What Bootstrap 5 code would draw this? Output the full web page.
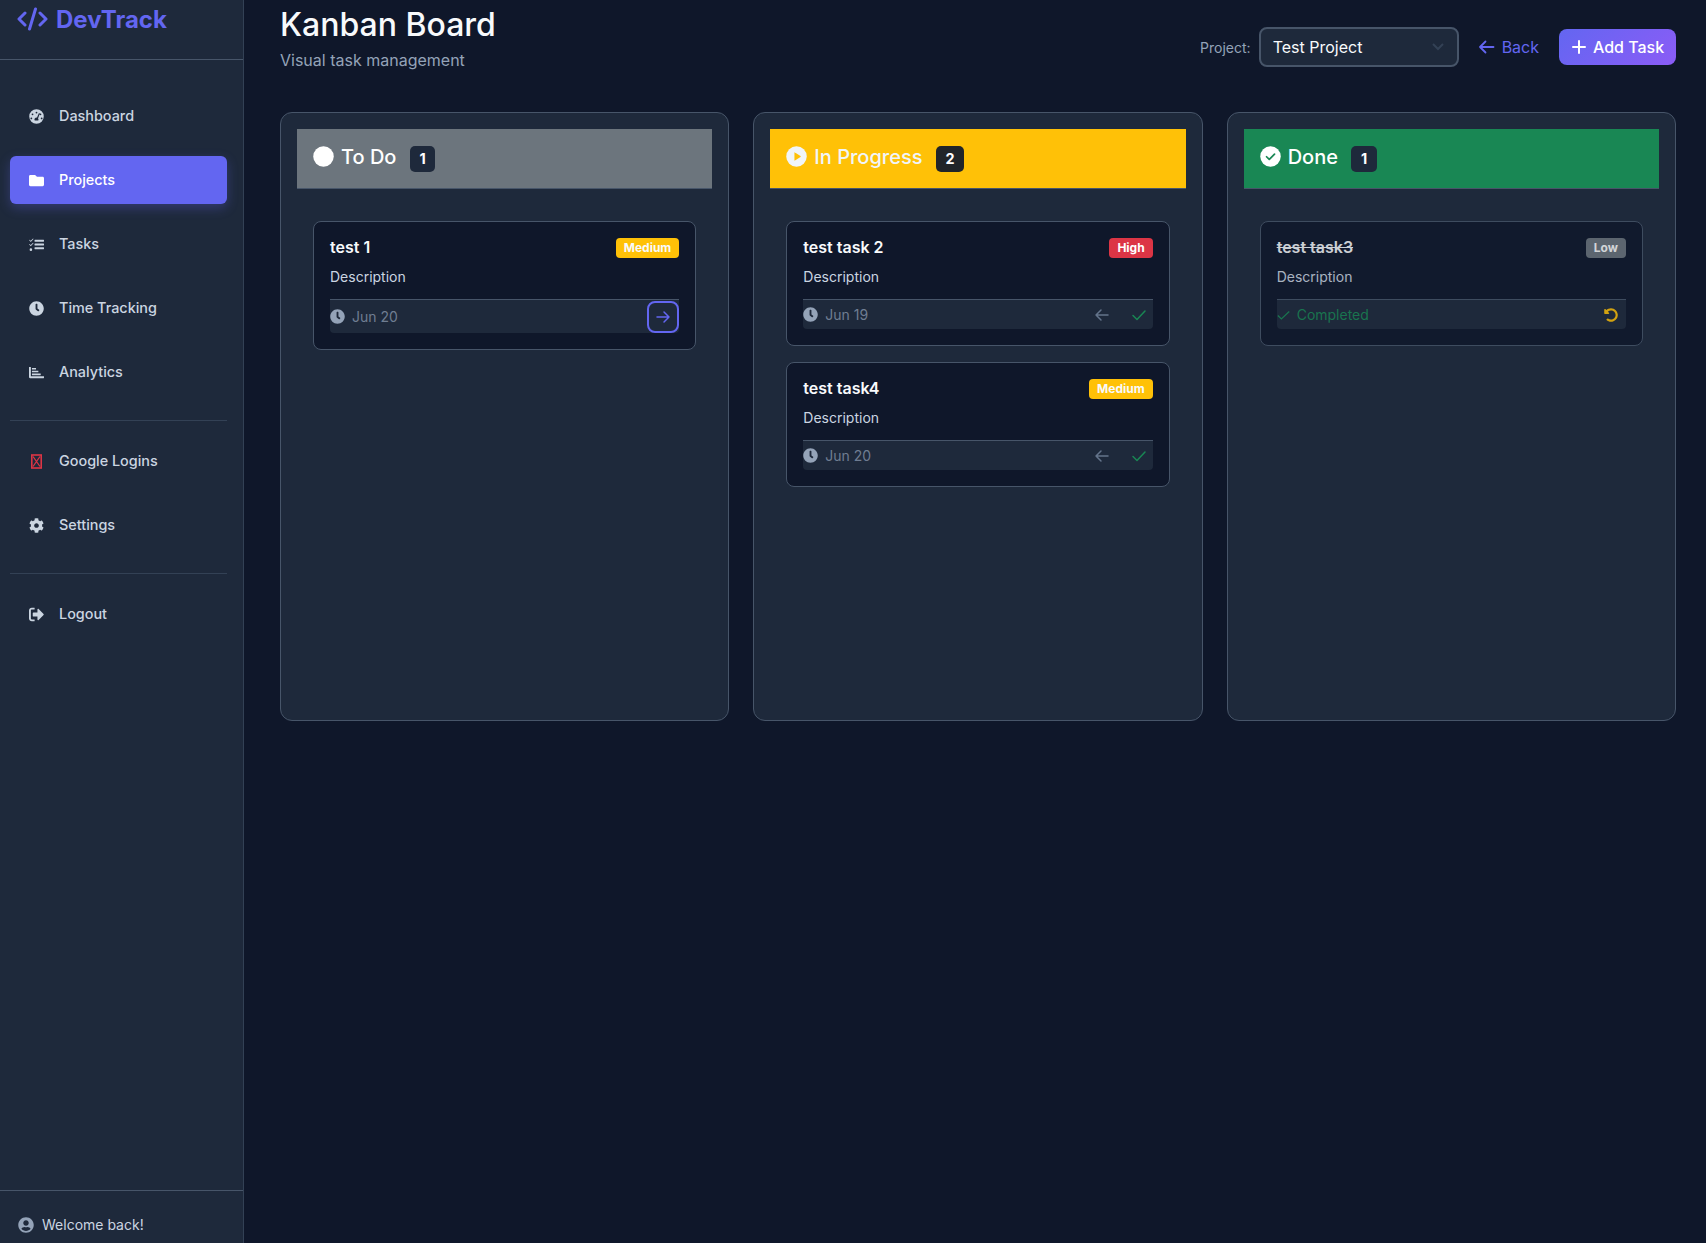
<!DOCTYPE html>
<html lang="en"><head><meta charset="utf-8"><title>Kanban Board</title>
<link href="https://cdn.jsdelivr.net/npm/bootstrap@5.3.0/dist/css/bootstrap.min.css" rel="stylesheet">
<style>
html,body{height:100%}
body{background:#0f172a;color:#f8fafc;font-family:Inter,"Liberation Sans",sans-serif;overflow:hidden}
.dt-shell{height:1243px}
.dt-side{width:244px;flex:none;background:#1e293b;border-right:1px solid #334155}
.dt-brand{height:60px;padding:2px 17px 0;border-bottom:1px solid #475569;color:#6366f1;font-size:24px;font-weight:700;line-height:36px;gap:8px}
.dt-menu{padding:32px 16px 0 10px}
.dt-link{height:48px;margin-bottom:16px;padding:0 19px;gap:15px;color:#cbd5e1;font-size:14.4px;font-weight:500;border-radius:6px;text-decoration:none}
.dt-link svg{width:15px;height:15px;fill:currentColor;flex:none}
.dt-link.is-on{background:#6366f1;color:#fff;box-shadow:0 4px 12px rgba(99,102,241,.3)}
.dt-rule{border-top:1px solid #334155;margin:8px 0 16px;height:0}
.dt-foot{height:53px;border-top:1px solid #475569;padding:23px 18px 0;margin-top:auto;gap:8px;color:#cbd5e1;font-size:14px}
.dt-foot svg{width:16px;height:16px;fill:#94a3b8;margin-top:3px}
.dt-main{padding:6px 30px 0 36px;min-width:0}
.dt-title{font-size:32px;font-weight:500;line-height:38px;margin:0;color:#f8fafc}
.dt-sub{color:#94a3b8;font-size:16px;line-height:24px;margin:4px 0 0}
.dt-top{height:106px}
.dt-tools{padding-top:21px;gap:20px}
.dt-plabel{color:#94a3b8;font-size:14px;margin-right:8px;margin-top:1px}
.dt-select{width:200px;height:40px;background-color:#1e293b;border:2px solid #475569;border-radius:8px;color:#f8fafc;font-size:16px;padding:0 12px;appearance:none}
.dt-selwrap{position:relative}
.dt-selwrap svg{position:absolute;right:15px;top:15px;width:12px;height:10px;stroke:#334155;fill:none;stroke-width:2;pointer-events:none}
.dt-back{color:#6366f1;font-size:16px;gap:7px;text-decoration:none;padding:0;border:0}
.dt-back svg{margin-left:-1px}
.dt-add{height:36px;width:117px;color:#fff;font-size:16px;font-weight:500;gap:6px;border:0;border-radius:8px;background:linear-gradient(135deg,#6366f1,#8b5cf6);padding:0}
.dt-board{display:grid;grid-template-columns:repeat(3,1fr);gap:24px}
.dt-col{height:609px;background:#1e293b;border:1px solid #475569;border-radius:12px;padding:16px}
.dt-head{height:60px;padding:0 16px 4px;font-size:20px;font-weight:500;border-bottom:1px solid #475569;gap:7px;color:#fff}
.dt-head svg{width:21px;height:21px;flex:none;margin-top:-1px}
.dt-head.h-todo{background:#6c757d}.dt-head.h-prog{background:#ffc107;color:#f1f5f9}.dt-head.h-done{background:#198754}
.dt-count{display:inline-flex;align-items:center;justify-content:center;height:26px;padding:0 9.5px;margin-left:6.5px;margin-top:5px;background:#1e293b;color:#fff;font-size:14.4px;font-weight:700;border-radius:5px}
.h-prog .dt-count{background:#212529}
.dt-list{padding:32px 16px 0}
.dt-task{background:#0f172a;border:1px solid #475569;border-radius:8px;padding:16px;margin-bottom:16px;color:#f8fafc}
.dt-task.is-done{opacity:.8}
.dt-name{font-size:16px;font-weight:600;line-height:19px;margin:0}
.is-done .dt-name{text-decoration:line-through}
.dt-pri{font-size:12px;font-weight:700;line-height:14px;height:20px;padding:3px 8px;border-radius:4px;color:#fff}
.dt-pri.p-m{background:#ffc107;color:#f8fafc}.dt-pri.p-h{background:#dc3545}.dt-pri.p-l{background:#6c757d}
.dt-desc{color:#cbd5e1;font-size:14px;line-height:22px;margin:8px 0 11px}
.dt-bar{min-height:30px;background:#1e293b;border-top:1px solid #475569;border-radius:0 0 4px 4px;color:#6f7d92;font-size:14px}
.dt-date{gap:7px}
.dt-clock{width:15px;height:15px;fill:#94a3b8}
.dt-pair{margin-right:-2px}
.dt-act{width:32px;height:29px;display:flex;align-items:center;justify-content:center;background:none;border:0;padding:0;border-radius:8px}
.dt-act svg{width:16px;height:16px;fill:none;stroke:currentColor;stroke-width:1.5;stroke-linecap:round;stroke-linejoin:round}
.dt-act.a-next{height:32px;margin-top:1px;border:2px solid #6366f1;color:#6366f1}
.dt-act.a-prev{color:#64748b}.dt-act.a-ok{color:#198754;margin-left:5px}
.dt-act.a-undo{color:#ffc107;width:30px}
.dt-act.a-undo svg{width:14px;height:14px;fill:currentColor;stroke:none}
.dt-comp{color:#198754;gap:6px}
.dt-comp svg{width:14px;height:14px;fill:none;stroke:currentColor;stroke-width:1.5}
</style></head>
<body>
<div class="d-flex dt-shell">
<aside class="dt-side d-flex flex-column">
  <div class="dt-brand d-flex align-items-start">
    <svg width="31" height="26" viewBox="0 0 31 26" fill="none" stroke="#6366f1" stroke-width="3" stroke-linecap="round" stroke-linejoin="round" class="mt-1"><path d="M8 7 2 13l6 6M23 7l6 6-6 6M18.500 3 12.500 23"/></svg>
    <span>DevTrack</span>
  </div>
  <nav class="dt-menu d-flex flex-column">
    <a class="dt-link d-flex align-items-center" href="#"><svg viewBox="0 0 512 512"><path fill-rule="evenodd" d="M256 8a248 248 0 1 0 0 496 248 248 0 0 0 0-496zM256 90a30 30 0 1 1 0 60 30 30 0 0 1 0-60zM120 150a30 30 0 1 1 0 60 30 30 0 0 1 0-60zM80 290a30 30 0 1 1 0 60 30 30 0 0 1 0-60zM432 290a30 30 0 1 1 0 60 30 30 0 0 1 0-60zM392 150a30 30 0 1 1 0 60 30 30 0 0 1 0-60zM340 140l30 14-62 170c20 22 20 50 8 70H196c-30-50 10-110 78-104z"/></svg>Dashboard</a>
    <a class="dt-link is-on d-flex align-items-center" href="#"><svg viewBox="0 0 512 512"><path d="M464 128H272l-64-64H48C21.490 64 0 85.490 0 112v288c0 26.510 21.490 48 48 48h416c26.510 0 48-21.490 48-48V176c0-26.510-21.490-48-48-48z"/></svg>Projects</a>
    <a class="dt-link d-flex align-items-center" href="#"><svg viewBox="0 0 512 512"><path d="M200 96h300a12 12 0 0 1 12 12v40a12 12 0 0 1-12 12H200a12 12 0 0 1-12-12v-40a12 12 0 0 1 12-12zM200 224h300a12 12 0 0 1 12 12v40a12 12 0 0 1-12 12H200a12 12 0 0 1-12-12v-40a12 12 0 0 1 12-12zM200 352h300a12 12 0 0 1 12 12v40a12 12 0 0 1-12 12H200a12 12 0 0 1-12-12v-40a12 12 0 0 1 12-12zM65 388a44 44 0 1 0 0 88 44 44 0 0 0 0-88zM139 50 60 130 15 90 0 105l60 65 95-105zM139 195l-79 80-45-40-15 15 60 65 95-105z"/></svg>Tasks</a>
    <a class="dt-link d-flex align-items-center" href="#"><svg viewBox="0 0 512 512"><path d="M256,8C119,8,8,119,8,256S119,504,256,504,504,393,504,256,393,8,256,8Zm92.490,313h0l-20,25a16,16,0,0,1-22.490,2.500h0l-67-49.720a40,40,0,0,1-15-31.230V112a16,16,0,0,1,16-16h32a16,16,0,0,1,16,16V256l58,42.500A16,16,0,0,1,348.490,321Z"/></svg>Time Tracking</a>
    <a class="dt-link d-flex align-items-center" href="#"><svg viewBox="0 0 512 512"><path d="M500 384c6.600 0 12 5.400 12 12v40c0 6.600-5.400 12-12 12H36c-19.900 0-36-16.100-36-36V76c0-6.600 5.400-12 12-12h40c6.600 0 12 5.400 12 12v308zM110 290h280c6 0 10 4 10 10v36c0 6-4 10-10 10H110c-6 0-10-4-10-10v-36c0-6 4-10 10-10zM110 195h200c6 0 10 4 10 10v36c0 6-4 10-10 10H110c-6 0-10-4-10-10v-36c0-6 4-10 10-10zM110 100h120c6 0 10 4 10 10v36c0 6-4 10-10 10H110c-6 0-10-4-10-10v-36c0-6 4-10 10-10z"/></svg>Analytics</a>
    <div class="dt-rule"></div>
    <a class="dt-link d-flex align-items-center" href="#"><svg viewBox="0 0 15 15"><rect x="2.800" y="1" width="9.400" height="13" fill="none" stroke="#dc3545" stroke-width="1.600"/><path d="M4 2.500 11 12.500M11 2.500 4 12.500" stroke="#dc3545" stroke-width="1.300" fill="none"/></svg>Google Logins</a>
    <a class="dt-link d-flex align-items-center" href="#"><svg viewBox="0 0 512 512"><path d="M487.400 315.700l-42.600-24.600c4.300-23.200 4.300-47 0-70.200l42.600-24.600c4.900-2.800 7.100-8.600 5.500-14-11.100-35.600-30-67.800-54.700-94.600-3.800-4.100-10-5.100-14.800-2.300L380.800 110c-17.900-15.400-38.500-27.300-60.800-35.100V25.800c0-5.600-3.900-10.500-9.400-11.700-36.700-8.200-74.300-7.800-109.200 0-5.500 1.200-9.400 6.100-9.400 11.700V75c-22.200 7.900-42.800 19.800-60.800 35.100L88.700 85.500c-4.900-2.800-11-1.900-14.800 2.300-24.700 26.700-43.600 58.900-54.700 94.600-1.700 5.400.6 11.200 5.500 14L67.300 221c-4.300 23.200-4.300 47 0 70.200l-42.600 24.600c-4.900 2.800-7.100 8.600-5.500 14 11.100 35.600 30 67.800 54.700 94.600 3.800 4.100 10 5.100 14.800 2.300l42.600-24.600c17.900 15.400 38.500 27.300 60.800 35.100v49.200c0 5.600 3.900 10.500 9.400 11.700 36.700 8.200 74.300 7.800 109.200 0 5.500-1.200 9.400-6.100 9.400-11.700v-49.200c22.200-7.900 42.800-19.800 60.800-35.100l42.600 24.600c4.900 2.800 11 1.900 14.800-2.300 24.700-26.700 43.600-58.900 54.700-94.600 1.500-5.500-.7-11.300-5.600-14.100zM256 336c-44.100 0-80-35.900-80-80s35.900-80 80-80 80 35.900 80 80-35.900 80-80 80z"/></svg>Settings</a>
    <div class="dt-rule"></div>
    <a class="dt-link d-flex align-items-center" href="#"><svg viewBox="0 0 512 512"><path d="M497 273 329 441c-15 15-41 4.500-41-17v-96H152c-13.300 0-24-10.700-24-24v-96c0-13.300 10.700-24 24-24h136V88c0-21.400 25.900-32 41-17l168 168c9.300 9.400 9.300 24.600 0 34zM192 436v40c0 6.600-5.400 12-12 12H96c-53 0-96-43-96-96V120c0-53 43-96 96-96h84c6.600 0 12 5.400 12 12v40c0 6.600-5.400 12-12 12H96c-17.700 0-32 14.300-32 32v272c0 17.700 14.300 32 32 32h84c6.600 0 12 5.400 12 12z"/></svg>Logout</a>
  </nav>
  <div class="dt-foot d-flex align-items-start"><svg viewBox="0 0 496 512"><path d="M248 8C111 8 0 119 0 256s111 248 248 248 248-111 248-248S385 8 248 8zm0 96c48.600 0 88 39.400 88 88s-39.400 88-88 88-88-39.400-88-88 39.400-88 88-88zm0 344c-58.700 0-111.300-26.600-146.500-68.200 18.800-35.400 55.600-59.800 98.500-59.800 2.400 0 4.800.4 7.100 1.100 13 4.200 26.600 6.900 40.900 6.900 14.300 0 28-2.700 40.900-6.900 2.300-.7 4.700-1.100 7.100-1.100 42.900 0 79.700 24.400 98.500 59.800C359.300 421.400 306.700 448 248 448z"/></svg><span>Welcome back!</span></div>
</aside>
<main class="dt-main flex-grow-1">
  <div class="dt-top d-flex justify-content-between align-items-start">
    <div><h1 class="dt-title">Kanban Board</h1><p class="dt-sub">Visual task management</p></div>
    <div class="dt-tools d-flex align-items-center">
      <div class="d-flex align-items-center"><label class="dt-plabel">Project:</label>
        <div class="dt-selwrap"><select class="dt-select d-block"><option>Test Project</option></select><svg viewBox="0 0 12 10"><path d="M1 2l5 5 5-5"/></svg></div></div>
      <a class="dt-back btn d-flex align-items-center" href="#"><svg width="17" height="16" viewBox="0 0 17 16" fill="none" stroke="currentColor" stroke-width="1.800" stroke-linecap="round" stroke-linejoin="round"><path d="M15.500 8H2M7.500 2.500 2 8l5.500 5.500"/></svg>Back</a>
      <button class="dt-add btn d-flex align-items-center justify-content-center"><svg width="16" height="16" viewBox="0 0 16 16" fill="none" stroke="currentColor" stroke-width="2" stroke-linecap="round"><path d="M8 2v12M2 8h12"/></svg>Add Task</button>
    </div>
  </div>
  <div class="dt-board">
    <section class="dt-col">
      <div class="dt-head h-todo d-flex align-items-center"><svg viewBox="0 0 512 512"><circle cx="256" cy="256" r="250" fill="#fff"/></svg><span>To Do</span><span class="dt-count">1</span></div>
      <div class="dt-list">
        <div class="dt-task">
          <div class="d-flex justify-content-between"><h6 class="dt-name">test 1</h6><span class="dt-pri p-m">Medium</span></div>
          <p class="dt-desc">Description</p>
          <div class="dt-bar d-flex justify-content-between align-items-center"><span class="dt-date d-flex align-items-center"><svg class="dt-clock" viewBox="0 0 512 512"><path d="M256,8C119,8,8,119,8,256S119,504,256,504,504,393,504,256,393,8,256,8Zm92.490,313h0l-20,25a16,16,0,0,1-22.490,2.500h0l-67-49.720a40,40,0,0,1-15-31.230V112a16,16,0,0,1,16-16h32a16,16,0,0,1,16,16V256l58,42.500A16,16,0,0,1,348.490,321Z"/></svg>Jun 20</span>
            <button class="dt-act a-next"><svg viewBox="0 0 16 16"><path d="M2 8h12M9 3l5 5-5 5"/></svg></button></div>
        </div>
      </div>
    </section>
    <section class="dt-col">
      <div class="dt-head h-prog d-flex align-items-center"><svg viewBox="0 0 512 512"><circle cx="256" cy="256" r="250" fill="#f1f5f9"/><path d="M205 165q0-14 13-8l135 85q12 12 0 26l-135 88q-13 6-13-8z" fill="#ffc107"/></svg><span>In Progress</span><span class="dt-count">2</span></div>
      <div class="dt-list">
        <div class="dt-task">
          <div class="d-flex justify-content-between"><h6 class="dt-name">test task 2</h6><span class="dt-pri p-h">High</span></div>
          <p class="dt-desc">Description</p>
          <div class="dt-bar d-flex justify-content-between align-items-center"><span class="dt-date d-flex align-items-center"><svg class="dt-clock" viewBox="0 0 512 512"><path d="M256,8C119,8,8,119,8,256S119,504,256,504,504,393,504,256,393,8,256,8Zm92.490,313h0l-20,25a16,16,0,0,1-22.490,2.500h0l-67-49.720a40,40,0,0,1-15-31.230V112a16,16,0,0,1,16-16h32a16,16,0,0,1,16,16V256l58,42.500A16,16,0,0,1,348.490,321Z"/></svg>Jun 19</span>
            <span class="d-flex dt-pair"><button class="dt-act a-prev"><svg viewBox="0 0 16 16"><path d="M14 8H2M7 3 2 8l5 5"/></svg></button><button class="dt-act a-ok"><svg viewBox="0 0 16 16"><path d="m2 8.500 4 4L14 4"/></svg></button></span></div>
        </div>
        <div class="dt-task">
          <div class="d-flex justify-content-between"><h6 class="dt-name">test task4</h6><span class="dt-pri p-m">Medium</span></div>
          <p class="dt-desc">Description</p>
          <div class="dt-bar d-flex justify-content-between align-items-center"><span class="dt-date d-flex align-items-center"><svg class="dt-clock" viewBox="0 0 512 512"><path d="M256,8C119,8,8,119,8,256S119,504,256,504,504,393,504,256,393,8,256,8Zm92.490,313h0l-20,25a16,16,0,0,1-22.490,2.500h0l-67-49.720a40,40,0,0,1-15-31.230V112a16,16,0,0,1,16-16h32a16,16,0,0,1,16,16V256l58,42.500A16,16,0,0,1,348.490,321Z"/></svg>Jun 20</span>
            <span class="d-flex dt-pair"><button class="dt-act a-prev"><svg viewBox="0 0 16 16"><path d="M14 8H2M7 3 2 8l5 5"/></svg></button><button class="dt-act a-ok"><svg viewBox="0 0 16 16"><path d="m2 8.500 4 4L14 4"/></svg></button></span></div>
        </div>
      </div>
    </section>
    <section class="dt-col">
      <div class="dt-head h-done d-flex align-items-center"><svg viewBox="0 0 512 512"><circle cx="256" cy="256" r="250" fill="#fff"/><path d="M160 262l66 66 128-128" fill="none" stroke="#198754" stroke-width="42" stroke-linecap="round" stroke-linejoin="round"/></svg><span>Done</span><span class="dt-count">1</span></div>
      <div class="dt-list">
        <div class="dt-task is-done">
          <div class="d-flex justify-content-between"><h6 class="dt-name">test task3</h6><span class="dt-pri p-l">Low</span></div>
          <p class="dt-desc">Description</p>
          <div class="dt-bar d-flex justify-content-between align-items-center"><span class="dt-comp d-flex align-items-center"><svg viewBox="0 0 16 16"><path d="m1 8.500 4 4L14 4"/></svg>Completed</span>
            <button class="dt-act a-undo"><svg viewBox="0 0 512 512"><path d="M255.545 8c-66.269.119-126.438 26.233-170.860 68.685L48.971 40.971C33.851 25.851 8 36.559 8 57.941V192c0 13.255 10.745 24 24 24h134.059c21.382 0 32.090-25.851 16.971-40.971l-41.750-41.750c30.864-28.899 70.801-44.907 113.230-45.273 92.398-.798 170.283 73.977 169.484 169.442C423.236 348.009 349.816 424 256 424c-41.127 0-79.997-14.678-110.630-41.556-4.743-4.161-11.906-3.908-16.368.553L89.340 422.659c-4.872 4.872-4.631 12.815.482 17.433C133.798 479.813 192.074 504 256 504c136.966 0 247.999-111.033 248-247.998C504.001 119.193 392.354 7.755 255.545 8z"/></svg></button></div>
        </div>
      </div>
    </section>
  </div>
</main>
</div>
<script src="https://cdn.jsdelivr.net/npm/bootstrap@5.3.0/dist/js/bootstrap.bundle.min.js"></script>
</body></html>
